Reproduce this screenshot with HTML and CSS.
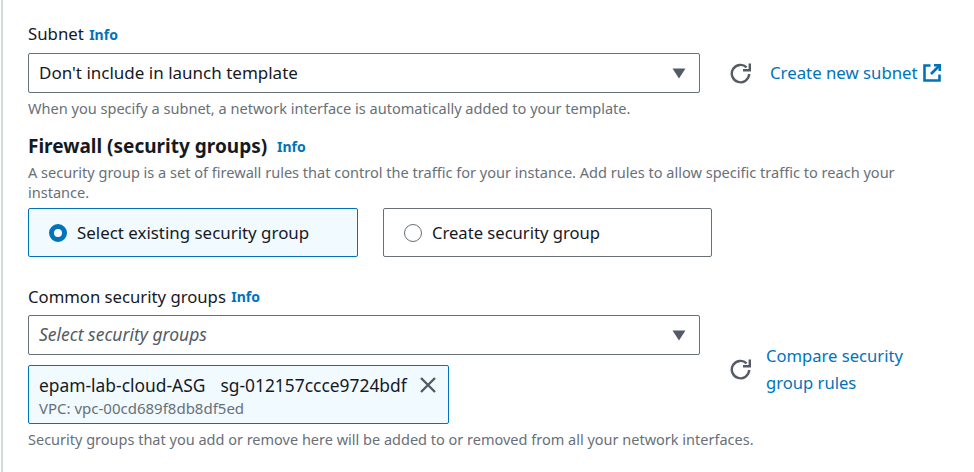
FILE: index.html
```html
<!DOCTYPE html>
<html lang="en">
<head>
    <meta charset="UTF-8">
    <meta name="viewport" content="width=device-width, initial-scale=1.0">
    <title>Network settings</title>
    <link rel="stylesheet" href="styles.css">
</head>
<body>
    <div class="panel">

        <!-- Subnet -->
        <div class="label">Subnet <a class="info">Info</a></div>
        <div class="row">
            <div class="select">
                <span>Don't include in launch template</span>
                <svg class="caret" width="14" height="11" viewBox="0 0 14 11"><path d="M0.5 0.5h13L7 10.5z"/></svg>
            </div>
            <svg class="refresh" width="22" height="22" viewBox="0 0 22 22"><path d="M19.2 12a8.7 8.7 0 1 1-2.6-6.6"/><path d="M19.8 1.5v6.8H13"/></svg>
            <a class="link">Create new subnet</a>
            <svg class="external" width="18" height="18" viewBox="0 0 18 18"><path d="M7.5 1.5H1.5v15h15v-6"/><path d="M11 1.2h5.8V7"/><path d="M16.5 1.5L8 10"/></svg>
        </div>
        <p class="hint">When you specify a subnet, a network interface is automatically added to your template.</p>

        <!-- Firewall -->
        <h2>Firewall (security groups) <a class="info">Info</a></h2>
        <p class="hint desc">A security group is a set of firewall rules that control the traffic for your instance. Add rules to allow specific traffic to reach your instance.</p>
        <div class="tiles">
            <div class="tile selected"><span class="radio"></span>Select existing security group</div>
            <div class="tile create"><span class="radio"></span>Create security group</div>
        </div>

        <!-- Common security groups -->
        <div class="label common">Common security groups <a class="info">Info</a></div>
        <div class="groups">
            <div class="groups-main">
                <div class="select">
                    <span class="placeholder">Select security groups</span>
                    <svg class="caret" width="14" height="11" viewBox="0 0 14 11"><path d="M0.5 0.5h13L7 10.5z"/></svg>
                </div>
                <div class="token">
                    <div>
                        <div class="token-name">epam-lab-cloud-ASG<span class="token-id">sg-012157ccce9724bdf</span></div>
                        <div class="token-vpc">VPC: vpc-00cd689f8db8df5ed</div>
                    </div>
                    <svg class="close" width="18" height="18" viewBox="0 0 18 18"><path d="M2 2l14 14M16 2L2 16"/></svg>
                </div>
            </div>
            <svg class="refresh" width="22" height="22" viewBox="0 0 22 22"><path d="M19.2 12a8.7 8.7 0 1 1-2.6-6.6"/><path d="M19.8 1.5v6.8H13"/></svg>
            <a class="link compare">Compare security group rules</a>
        </div>
        <p class="hint last">Security groups that you add or remove here will be added to or removed from all your network interfaces.</p>

    </div>
</body>
</html>
```

FILE: styles.css
```css
* {
    margin: 0;
    padding: 0;
    box-sizing: border-box;
    font-family: 'Noto Sans', sans-serif;
}

body {
    background: #fff;
    color: #16191f;
    width: 974px;
    height: 472px;
    overflow: hidden;
}

.panel {
    height: 100%;
    margin-left: 1px;
    border-left: 2px solid #d5dbdb;
    padding: 24px 0 0 25px;
}

.label {
    height: 20px;
    font-size: 16.8px;
    line-height: 20px;
    margin-bottom: 9px;
}

.info {
    color: #0073bb;
    font-size: 14px;
    font-weight: 700;
    margin-left: 1px;
}

.row {
    display: flex;
    align-items: center;
}

.row .link {
    margin-bottom: 2px;
}

.select {
    width: 672px;
    height: 40px;
    flex: none;
    border: 1px solid #687078;
    border-radius: 2px;
    padding: 0 13px 0 10px;
    display: flex;
    justify-content: space-between;
    align-items: center;
    font-size: 17px;
}

.select span {
    margin-bottom: 2px;
}

.caret {
    fill: #545b64;
}

.placeholder {
    font-size: 17.5px;
    font-style: italic;
    color: #545b64;
}

.refresh {
    margin-left: 30px;
    flex: none;
    fill: none;
    stroke: #545b64;
    stroke-width: 2.4;
}

.link {
    color: #0073bb;
    font-size: 16.8px;
    margin-left: 18px;
}

.external {
    margin-left: 5px;
    fill: none;
    stroke: #0073bb;
    stroke-width: 2.6;
}

.hint {
    font-size: 14.56px;
    line-height: 20px;
    color: #687078;
    margin-top: 5px;
}

.hint.last {
    font-size: 14.5px;
}

h2 {
    height: 24px;
    font-size: 19px;
    font-weight: 700;
    line-height: 24px;
    margin-top: 16px;
}

h2 .info {
    margin-left: 5px;
    vertical-align: 1px;
}

.desc {
    margin-top: 4px;
    width: 890px;
}

.tiles {
    display: flex;
    gap: 25px;
    margin-top: 6px;
}

.tile {
    width: 329px;
    height: 49px;
    border: 1px solid #687078;
    border-radius: 2px;
    display: flex;
    align-items: center;
    padding-left: 20px;
    font-size: 16.9px;
}

.tile.selected {
    width: 330px;
    border-color: #0073bb;
    background: #f1faff;
}

.tile.create {
    font-size: 16.6px;
}

.radio {
    width: 18px;
    height: 18px;
    border-radius: 50%;
    border: 1px solid #687078;
    background: #fff;
    margin-right: 10px;
}

.selected .radio {
    border: 5px solid #0073bb;
}

.common {
    font-size: 16.7px;
    margin-top: 30px;
    margin-bottom: 8px;
}

.common .info {
    vertical-align: 1px;
}

.groups {
    display: flex;
    align-items: flex-start;
}

.groups-main {
    flex: none;
}

.groups .refresh {
    margin-top: 43px;
}

.token {
    width: 421px;
    height: 59px;
    margin-top: 10px;
    border: 1px solid #0073bb;
    border-radius: 2px;
    background: #f1faff;
    padding: 2px 11px 0 10px;
    display: flex;
    justify-content: space-between;
    align-items: flex-start;
}

.token-name {
    font-size: 17.4px;
    line-height: 34px;
}

.token-id {
    margin-left: 15px;
}

.token-vpc {
    font-size: 15px;
    line-height: 12px;
    color: #687078;
}

.close {
    margin-top: 8px;
    fill: none;
    stroke: #545b64;
    stroke-width: 2.4;
}

.compare {
    width: 160px;
    font-size: 16.6px;
    line-height: 27px;
    margin-left: 14px;
    margin-top: 27px;
}
```
